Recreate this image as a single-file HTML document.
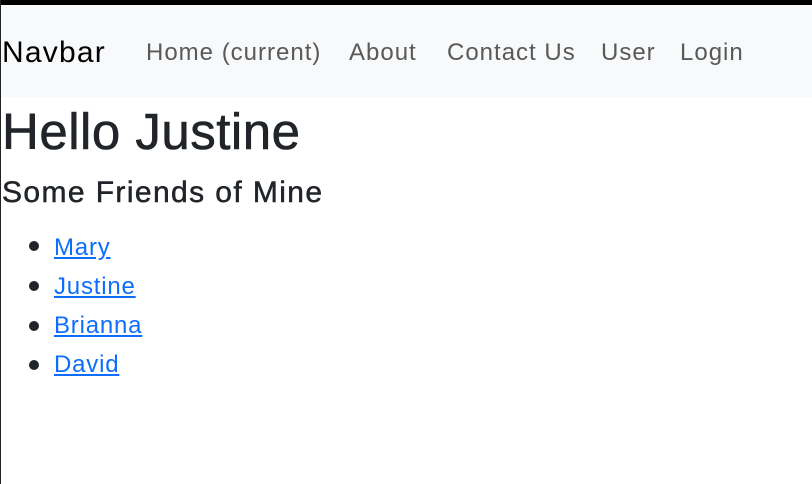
<!DOCTYPE html>
<html><head><style>
html,body{margin:0;padding:0;}
body{width:812px;height:484px;overflow:hidden;background:#fff;font-family:"Liberation Sans",sans-serif;color:#212529;position:relative;}
.top{position:absolute;left:0;top:0;width:812px;height:5px;background:#000;}
.left{position:absolute;left:0;top:0;width:1px;height:484px;background:#222;}
.nav{position:absolute;left:1px;top:5px;width:811px;height:92px;background:#f8f9fa;}
.t{position:absolute;white-space:nowrap;line-height:1;}
.brand{font-size:30px;color:#000;left:2px;top:38px;letter-spacing:1.2px;}
.l{font-size:24px;color:#595959;top:41px;letter-spacing:1px;}
h1{position:absolute;margin:0;font-weight:normal;font-size:51px;left:2px;top:106px;line-height:1;letter-spacing:0.5px;-webkit-text-stroke:0.6px #212529;}
h3{position:absolute;margin:0;font-weight:normal;font-size:30px;left:2px;top:178px;line-height:1;letter-spacing:1.4px;-webkit-text-stroke:0.5px #212529;}
.li{position:absolute;left:54px;font-size:24px;color:#0d6efd;text-decoration:underline;line-height:1;letter-spacing:0.8px;}
.b{position:absolute;left:29px;width:10px;height:10px;border-radius:50%;background:#212529;}
</style></head><body>
<div class="top"></div><div class="left"></div>
<div class="nav"></div>
<div class="t brand">Navbar</div>
<div class="t l" style="left:146px">Home (current)</div>
<div class="t l" style="left:349px">About</div>
<div class="t l" style="left:447px">Contact Us</div>
<div class="t l" style="left:601px">User</div>
<div class="t l" style="left:680px">Login</div>
<h1>Hello Justine</h1>
<h3>Some Friends of Mine</h3>
<div class="b" style="top:241px"></div><div class="li" style="top:236px">Mary</div>
<div class="b" style="top:281px"></div><div class="li" style="top:275px">Justine</div>
<div class="b" style="top:321px"></div><div class="li" style="top:314px">Brianna</div>
<div class="b" style="top:360px"></div><div class="li" style="top:353px">David</div>
</body></html>
